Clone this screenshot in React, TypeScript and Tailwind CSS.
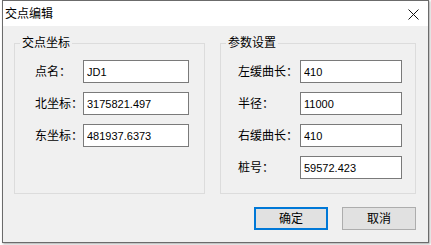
import React from 'react';

const font = "font-['Liberation_Sans','Noto_Sans_CJK_SC',sans-serif]";

type Field = { label: string; value: string };

const pointFields: Field[] = [
  { label: '点名：', value: 'JD1' },
  { label: '北坐标：', value: '3175821.497' },
  { label: '东坐标：', value: '481937.6373' },
];

const paramFields: Field[] = [
  { label: '左缓曲长：', value: '410' },
  { label: '半径：', value: '11000' },
  { label: '右缓曲长：', value: '410' },
  { label: '桩号：', value: '59572.423' },
];

const GroupBox = ({
  title,
  className,
  children,
}: {
  title: string;
  className: string;
  children: React.ReactNode;
}) => (
  <div className={`relative border border-[#dcdcdc] h-[151px] ${className}`}>
    {/* legend sits on the top border */}
    <span className="absolute -top-[8px] left-[5px] px-[2px] bg-[#f0f0f0] text-[12px] leading-[14px] text-black">
      {title}
    </span>
    {children}
  </div>
);

const FieldRow = ({ field, labelW, inputW }: { field: Field; labelW: string; inputW: string }) => (
  <div className="flex items-center h-[23px]">
    <span className={`${labelW} text-[12px] leading-[14px] text-black whitespace-nowrap`}>{field.label}</span>
    <input
      readOnly
      value={field.value}
      className={`${inputW} h-[23px] border border-[#7a7a7a] bg-white px-[3px] text-[11px] text-black outline-none ${font}`}
    />
  </div>
);

export default function App() {
  return (
    <div className={`w-[431px] h-[245px] bg-white ${font}`}>
      <div className="ml-[2px] w-[427px] h-[243px] border border-[#6b6b6b] bg-[#f0f0f0] shadow-[1px_1px_2px_rgba(0,0,0,0.35)] flex flex-col">
        {/* Title bar */}
        <div className="h-[25px] bg-white flex items-center justify-between pl-[2px] pr-[9px]">
          <span className="text-[12px] leading-[14px] text-black">交点编辑</span>
          <svg width="11" height="11" viewBox="0 0 11 11" className="mt-[2px]">
            <path d="M0.5 0.5 L10.5 10.5 M10.5 0.5 L0.5 10.5" stroke="#111" strokeWidth="1" fill="none" />
          </svg>
        </div>

        {/* Client area */}
        <div className="flex-1 pl-[11px] pt-[17px]">
          <div className="flex gap-[15px]">
            <GroupBox title="交点坐标" className="w-[191px] pt-[16px] pl-[20px]">
              <div className="flex flex-col gap-[9px]">
                {pointFields.map(f => (
                  <FieldRow key={f.label} field={f} labelW="w-[48px]" inputW="w-[106px]" />
                ))}
              </div>
            </GroupBox>
            <GroupBox title="参数设置" className="w-[196px] pt-[16px] pl-[17px]">
              <div className="flex flex-col gap-[9px]">
                {paramFields.map(f => (
                  <FieldRow key={f.label} field={f} labelW="w-[62px]" inputW="w-[102px]" />
                ))}
              </div>
            </GroupBox>
          </div>

          {/* Buttons */}
          <div className="flex justify-end gap-[14px] mt-[13px] w-[402px]">
            <button className="w-[74px] h-[23px] border-2 border-[#0078d7] bg-[#e1e1e1] text-[12px] leading-[14px] text-black">
              确定
            </button>
            <button className="w-[74px] h-[23px] border border-[#adadad] bg-[#e1e1e1] text-[12px] leading-[14px] text-black">
              取消
            </button>
          </div>
        </div>
      </div>
    </div>
  );
}
